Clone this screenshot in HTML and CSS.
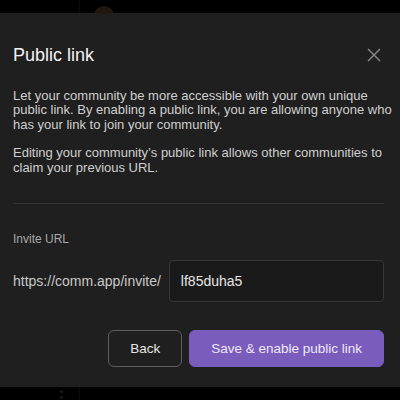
FILE: index.html
```html
<!DOCTYPE html>
<html>
<head>
<meta charset="utf-8">
<link rel="stylesheet" href="styles.css">
</head>
<body>
<div class="page">
  <div class="strip strip-top">
    <div class="rail"></div>
    <div class="avatar"></div>
  </div>
  <div class="modal">
    <div class="modal-header">
      <h1 class="title">Public link</h1>
      <button class="close" aria-label="Close">
        <svg width="14" height="14" viewBox="0 0 14 14"><path d="M1 1 L13 13 M13 1 L1 13" stroke="#8a8a8a" stroke-width="1.4" fill="none"/></svg>
      </button>
    </div>
    <div class="body">
      <p>Let your community be more accessible with your own unique public link. By enabling a public link, you are allowing anyone who has your link to join your community.</p>
      <p>Editing your community’s public link allows other communities to claim your previous URL.</p>
    </div>
    <div class="divider"></div>
    <div class="field">
      <div class="label">Invite URL</div>
      <div class="url-row">
        <span class="prefix">https://comm.app/invite/</span>
        <div class="input">lf85duha5</div>
      </div>
    </div>
    <div class="actions">
      <button class="btn btn-outline">Back</button>
      <button class="btn btn-primary">Save &amp; enable public link</button>
    </div>
  </div>
  <div class="strip strip-bottom">
    <div class="dots"><span></span><span></span></div>
    <div class="rail"></div>
  </div>
</div>
</body>
</html>
```

FILE: styles.css
```css
* { box-sizing: border-box; }
html, body { margin: 0; padding: 0; background: #000; }
body {
  font-family: "Liberation Sans", Arial, sans-serif;
  width: 400px;
  height: 400px;
  overflow: hidden;
}
.page { display: flex; flex-direction: column; height: 400px; }

.strip { display: flex; align-items: flex-start; overflow: hidden; background: #000; }
.strip-top { height: 13px; }
.strip-bottom { height: 13px; }
.strip-top .rail { width: 1px; height: 13px; background: #0d0d0d; margin-left: 79px; }
.avatar { width: 20px; height: 20px; border-radius: 50%; background: #22170f; margin-left: 14px; margin-top: 6px; }
.strip-bottom .dots { display: flex; flex-direction: column; gap: 3px; margin-left: 60px; margin-top: 3px; }
.dots span { width: 3px; height: 3px; border-radius: 50%; background: #1a1a1a; }
.strip-bottom .rail { width: 1px; height: 14px; background: #0d0d0d; margin-left: 16px; }

.modal {
  flex: 1;
  background: #1f1f1f;
  padding: 31px 16px 20px 13px;
  display: flex;
  flex-direction: column;
}
.modal-header { display: flex; align-items: center; justify-content: space-between; height: 22px; }
.title { margin: 0; font-size: 18px; font-weight: 400; line-height: 22px; color: #f2f2f2; }
.close { background: none; border: 0; padding: 0; margin-right: 3px; display: flex; width: 14px; height: 14px; }

.body { margin-top: 23px; margin-right: -8px; }
.body p { margin: 0 0 14px; font-size: 13px; line-height: 14.4px; color: #cfcfcf; }
.body p:last-child { margin-bottom: 0; }

.divider { height: 1px; background: #343434; margin-top: 28px; }

.field { margin-top: 28px; }
.label { font-size: 12px; line-height: 14px; color: #a8a8a8; }
.url-row { display: flex; align-items: center; gap: 8px; margin-top: 14px; }
.prefix { font-size: 14px; color: #c8c8c8; white-space: nowrap; }
.input {
  flex: 1;
  height: 42px;
  border: 1px solid #363636;
  border-radius: 4px;
  background: #1a1a1a;
  padding: 0 11px;
  display: flex;
  align-items: center;
  font-size: 14px;
  color: #e6e6e6;
}

.actions { display: flex; justify-content: flex-end; gap: 7px; margin-top: 28px; }
.btn {
  font-family: "Liberation Sans", Arial, sans-serif;
  height: 37px;
  border-radius: 6px;
  font-size: 13.5px;
  padding: 0 21px;
  cursor: pointer;
}
.btn-outline { background: transparent; border: 1px solid #5e5e5e; color: #e6e6e6; }
.btn-primary { background: #7a5cbd; border: 1px solid #7a5cbd; color: #ece8f6; }
```
